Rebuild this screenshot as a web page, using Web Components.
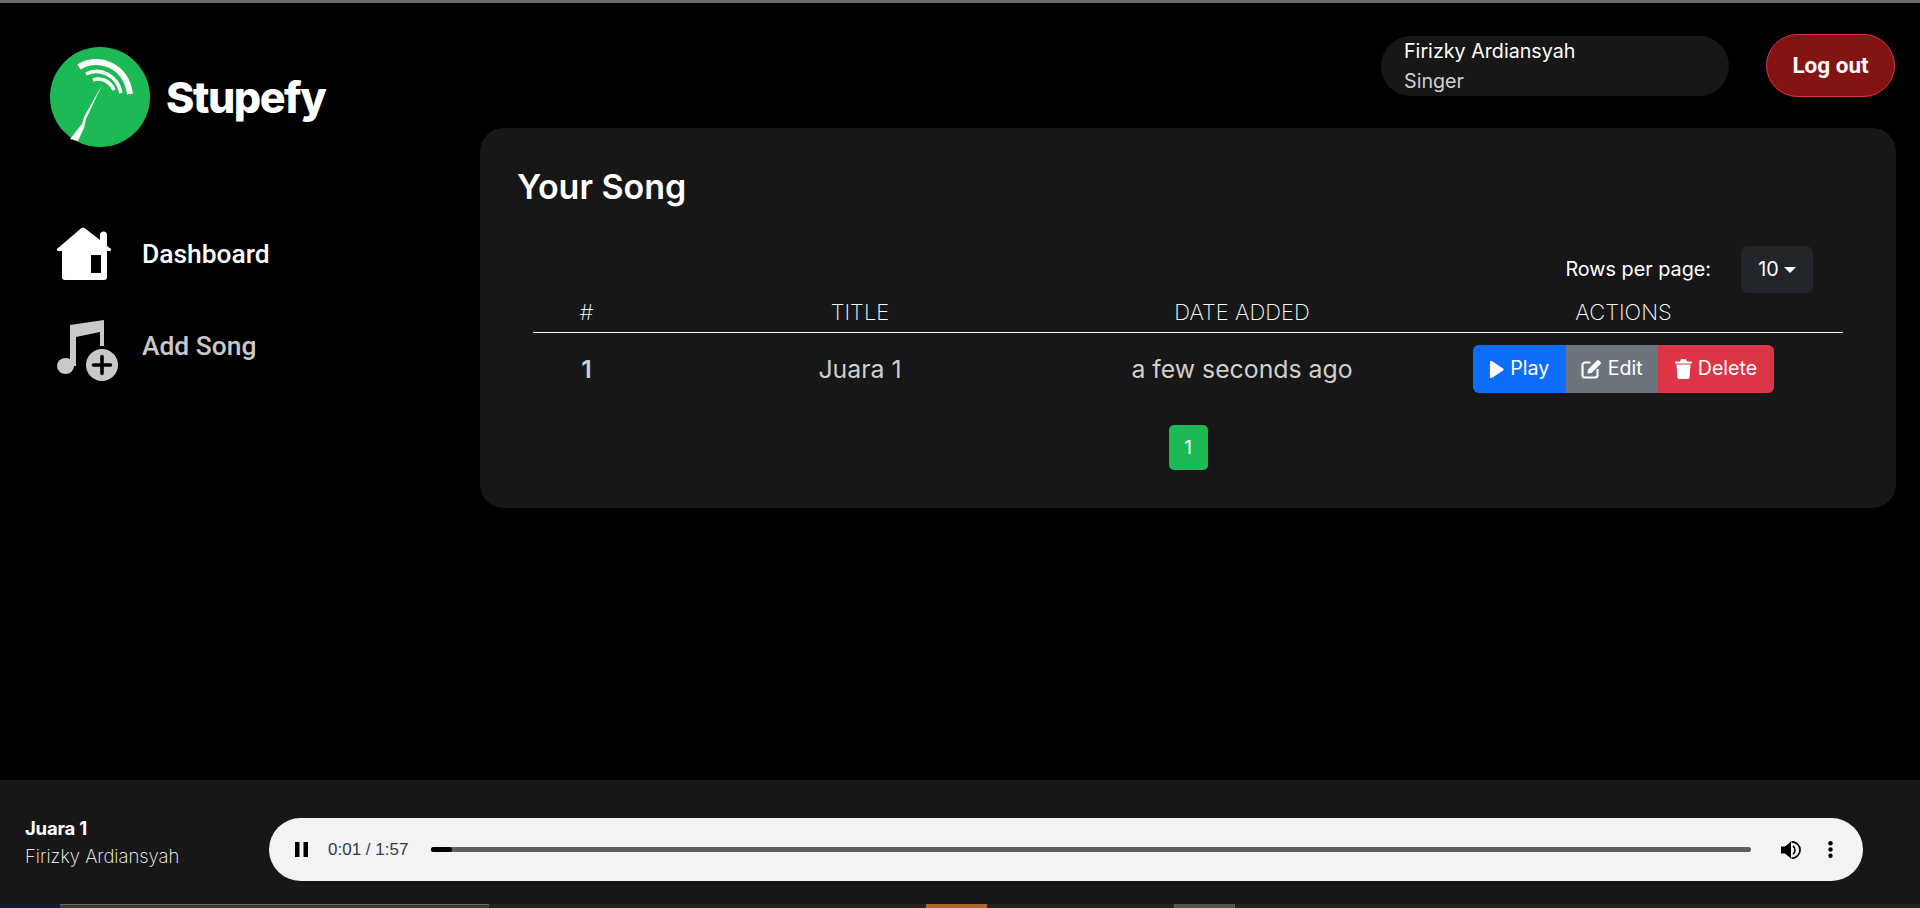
<!DOCTYPE html>
<html lang="en"><head><meta charset="utf-8"><title>Stupefy</title>
<style>
html,body{margin:0;padding:0;height:100%;background:#000;overflow:hidden}
body{font-family:Inter,"Liberation Sans",sans-serif;color:#fff}
</style></head><body>
<app-shell></app-shell>
<script>
function el(name, css, html){
  customElements.define(name, class extends HTMLElement{
    constructor(){super();this.attachShadow({mode:'open'}).innerHTML='<style>'+css+'</style>'+html;}
  });
}
el('app-logo',`:host{display:flex;align-items:center;gap:16px;height:102px}
svg{display:block}
span{font:800 43px/1 Inter,"Liberation Sans",sans-serif;letter-spacing:-1.45px;color:#fff}`,
`<svg width="100" height="100" viewBox="0 0 100 100"><circle cx="50" cy="50" r="50" fill="#1db954"/>
<path d="M29 20C48 8 76 18 80 47" fill="none" stroke="#fff" stroke-width="6"/>
<path d="M36 27C50 20 67 28 71 46" fill="none" stroke="#fff" stroke-width="3.6"/>
<path d="M43 33C51 30 60 34 64 43" fill="none" stroke="#fff" stroke-width="3.6"/>
<path d="M52 38L34 70L32 77L20 92L28 94L34 81L36 72Z" fill="#fff"/></svg><span>Stupefy</span>`);
el('nav-item',`:host{display:flex;align-items:center;height:92px;color:#c9c9c9;font:500 26.4px/1 Roboto,sans-serif}
:host([active]){color:#fff}
.i{width:85px;flex:none;display:flex}`,`<div class="i"><slot name="icon"></slot></div><slot></slot>`);
el('side-bar',`:host{display:block;width:480px;flex:none;box-sizing:border-box;padding:43px 0 0 50px}
nav{display:flex;flex-direction:column;margin:60px 0 0 7px}`,
`<app-logo></app-logo><nav><slot></slot></nav>`);
el('user-pill',`:host{display:flex;flex-direction:column;justify-content:center;box-sizing:border-box;width:348px;height:60px;border-radius:30px;background:#171717;padding:0 23px;font:400 19.7px/30px Inter,sans-serif;color:#fff}
.r{color:#cfcfcf}`,`<div>Firizky Ardiansyah</div><div class="r">Singer</div>`);
el('logout-btn',`:host{display:flex;align-items:center;justify-content:center;box-sizing:border-box;width:129px;height:63px;border-radius:32px;background:#841414;border:1px solid #dc3545;font:700 22.5px/1 Roboto,sans-serif;color:#fff}`,`Log out`);
el('top-bar',`:host{display:flex;justify-content:flex-end;align-items:center;gap:37px;height:63px;padding:31px 25px 0 0;margin-bottom:31px}`,
`<user-pill></user-pill><logout-btn></logout-btn>`);
el('b-btn',`:host{display:inline-flex;align-items:center;justify-content:center;gap:6px;height:48px;box-sizing:border-box;font:400 19.6px/1 Inter,sans-serif;color:#fff;background:var(--bg);padding:0 var(--p,16px)}
:host([first]){border-radius:6px 0 0 6px}:host([last]){border-radius:0 6px 6px 0}
::slotted(svg){display:block}`,`<slot></slot>`);
el('rows-select',`:host{display:flex;justify-content:flex-end;align-items:center;height:47px;padding-right:46px;font:400 19.8px/1 Inter,sans-serif}
.d{margin-left:30px;width:72px;height:47px;border-radius:7px;background:#212529;display:flex;align-items:center;justify-content:center;gap:5px}
.c{width:0;height:0;border:6px solid transparent;border-top-color:#fff;border-bottom:0}`,
`Rows per page:<div class="d">10<i class="c"></i></div>`);
el('song-row',`:host{display:grid;grid-template-columns:var(--cols);align-items:center;justify-items:center;height:72px;font:400 24.8px/1 Inter,sans-serif;color:#cfcfcf}
b{font-weight:600}
.a{display:flex;color:#fff}`,
`<b>1</b><div>Juara 1</div><div>a few seconds ago</div><div class="a"><slot></slot></div>`);
el('song-table',`:host{display:block;margin:0 16px;--cols:107px 440px 324px 439px}
.h{display:grid;grid-template-columns:var(--cols);justify-items:center;align-items:center;height:40px;padding-bottom:2px;border-bottom:1.5px solid #fff;font:170 22px/1 Inter,sans-serif;color:#fff;box-sizing:border-box}
.p{display:flex;justify-content:center;margin-top:20px}
.n{width:39px;height:45px;border-radius:5px;background:#1db954;display:flex;align-items:center;justify-content:center;font:400 19px/1 Inter,sans-serif}`,
`<div class="h"><div>#</div><div>TITLE</div><div>DATE ADDED</div><div>ACTIONS</div></div><slot></slot><div class="p"><div class="n">1</div></div>`);
el('song-card',`:host{display:block;box-sizing:border-box;width:1416px;height:380px;background:#171717;border-radius:24px;padding:42px 37px 0}
h1{margin:0;font:600 34px/1 Inter,sans-serif;color:#fff}
.s{height:42px}`,`<h1>Your Song</h1><div class="s"></div><rows-select></rows-select><slot></slot>`);
el('audio-bar',`:host{display:flex;align-items:center;box-sizing:border-box;width:1594px;height:63px;margin-top:15px;border-radius:32px;background:#f1f3f4;color:#1d1d1d;font:400 17px/1 "Liberation Sans",Arial,sans-serif;padding:0 30px 0 26px}
svg{display:block;flex:none}
.t{margin-left:20px;width:83px;white-space:nowrap;color:#3b3b3b}
.tr{flex:1;margin-left:20px;height:5px;border-radius:3px;background:#5e5e5e;position:relative;margin-right:30px}
.f{position:absolute;left:0;top:0;bottom:0;width:21px;border-radius:3px;background:#000}`,
`<svg width="13" height="15" viewBox="0 0 13 15"><path d="M0 0h4.500v15H0zM8.500 0H13v15H8.500z" fill="#000"/></svg><div class="t">0:01 / 1:57</div><div class="tr"><div class="f"></div></div>
<svg width="20" height="18" viewBox="0 0 20 18" style="margin-right:27px"><path d="M0 5.500h4L10 .5v17l-6-5H0z" fill="#000"/><path d="M12 5a5 5 0 0 1 0 8" fill="none" stroke="#000" stroke-width="1.600"/><path d="M10.500.5c5 .8 8.500 4 8.500 8.500s-3.500 7.700-8.500 8.500" fill="none" stroke="#000" stroke-width="1.800"/></svg>
<svg width="5" height="17" viewBox="0 0 5 17"><circle cx="2.500" cy="2.200" r="2.200"/><circle cx="2.500" cy="8.500" r="2.200"/><circle cx="2.500" cy="14.800" r="2.200"/></svg>`);
el('player-bar',`:host{display:flex;align-items:center;box-sizing:border-box;height:124px;background:#171717;padding:0 57px 0 25px}
.m{width:244px;flex:none}
.a{font:700 18.500px/1 Inter,sans-serif;color:#fff;margin-bottom:9px;letter-spacing:-.2px}
.b{font:170 18.500px/1 Inter,sans-serif;color:#fff}`,
`<div class="m"><div class="a">Juara 1</div><div class="b">Firizky Ardiansyah</div></div><audio-bar></audio-bar>`);
el('task-strip',`:host{display:grid;grid-template-columns:60px 429px 437px 61px 187px 61px 1fr;height:4px;background:#232323}
i:nth-of-type(1){background:#101a30}
i:nth-of-type(2){background:#3c3c3c;border-top:1px solid #6a6a6a}
i:nth-of-type(4){background:#b0642a}
i:nth-of-type(6){background:#555}`,`<i></i><i></i><i></i><i></i><i></i><i></i><i></i>`);
el('app-shell',`:host{display:flex;flex-direction:column;height:908px;background:#000;overflow:hidden}
.top{height:3px;background:#6a6a6a;flex:none}
.mid{flex:1;display:flex;min-height:0}
.main{flex:1;min-width:0}`,
`<div class="top"></div><div class="mid"><side-bar>
<nav-item active><svg slot="icon" width="54" height="54" viewBox="0 0 54 54" fill="#fff"><path d="M24.500 1a2.500 2.500 0 0 1 3 0L43 13V8a3.500 3.500 0 0 1 7 0v11l3.500 2.500c1 1 .5 2.500-1 2.500H50v26a3 3 0 0 1-3 3H8a3 3 0 0 1-3-3V24H1.500c-1.500 0-2-1.500-1-2.500z"/><rect x="34" y="28" width="10" height="18" fill="#000"/></svg>Dashboard</nav-item>
<nav-item><svg slot="icon" style="margin-top:10px" width="62" height="62" viewBox="0 0 62 62" fill="#c9c9c9"><path d="M13 5L47 0V26H43V12L19 17V46H13Z"/><ellipse cx="8.500" cy="46" rx="8.500" ry="8"/><circle cx="45" cy="45" r="16"/><path d="M45 36.500v17M36.500 45h17" stroke="#000" stroke-width="3.600" stroke-linecap="round"/></svg>Add Song</nav-item>
</side-bar><div class="main"><top-bar></top-bar><song-card><song-table><song-row>
<b-btn first style="--bg:#0d6efd;--p:16.500px"><svg width="15" height="19" viewBox="0 0 16 19" fill="#fff"><path d="M1 1.500c0-1 1-1.500 2-1L15 8.500c.8.500.8 1.500 0 2L3 18.500c-1 .500-2 0-2-1z"/></svg>Play</b-btn>
<b-btn style="--bg:#6c757d;--p:15px"><svg width="21" height="20" viewBox="0 0 21 20"><path d="M9.500 3.500H4a2.500 2.500 0 0 0-2.500 2.500v10A2.500 2.500 0 0 0 4 18.500h10a2.500 2.500 0 0 0 2.500-2.500v-6" fill="none" stroke="#fff" stroke-width="2.200"/><path d="M7 10.500L16 1.500a1.500 1.500 0 0 1 2 0l1.500 1.500a1.500 1.500 0 0 1 0 2L10.500 14l-4 .5z" fill="#fff"/></svg>Edit</b-btn>
<b-btn last style="--bg:#dc3545;--p:17px"><svg width="17" height="20" viewBox="0 0 17 20" fill="#fff"><path d="M5.500 1.200C5.700.5 6.200 0 7 0h3c.8 0 1.300.5 1.500 1.200L12 2.500h4c.6 0 1 .4 1 1s-.4 1-1 1H1c-.6 0-1-.4-1-1s.4-1 1-1h4zM1.500 5.500h14l-1 12.700c-.1 1-.9 1.800-2 1.800h-8c-1.100 0-1.900-.8-2-1.800z"/></svg>Delete</b-btn>
</song-row></song-table></song-card></div></div><player-bar></player-bar><task-strip></task-strip>`);
</script></body></html>
